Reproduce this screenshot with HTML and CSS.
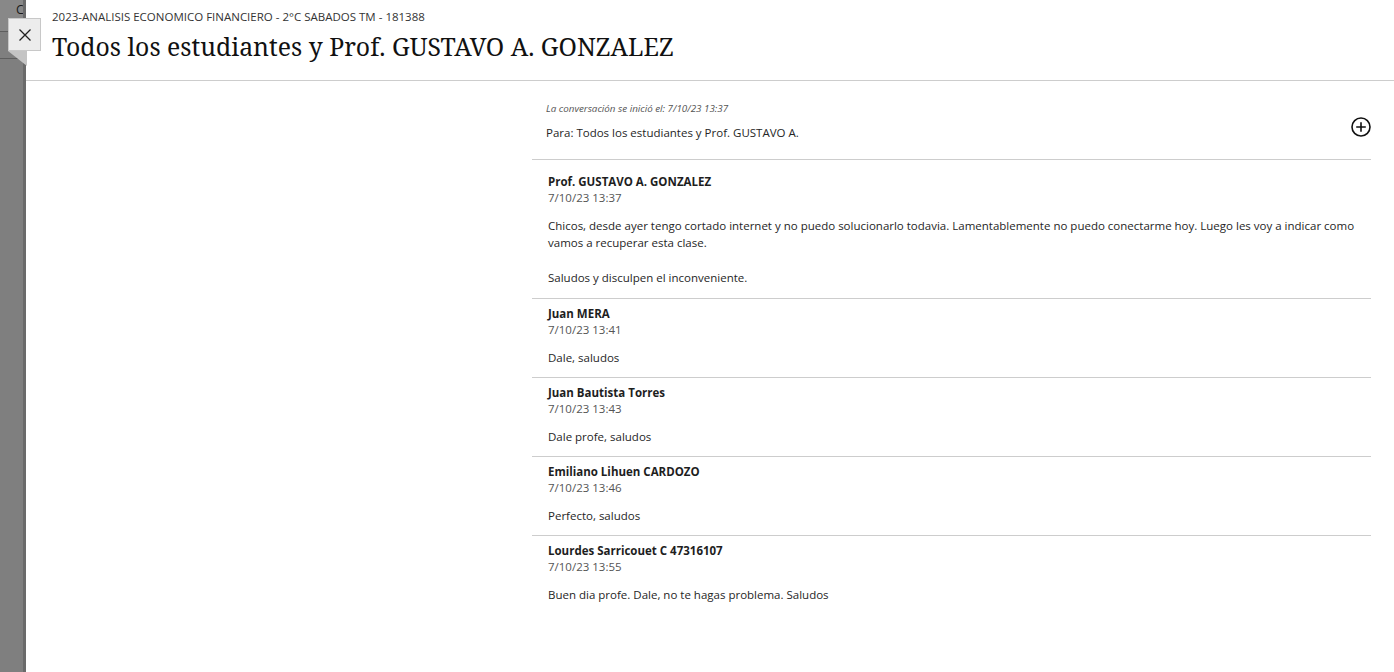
FILE: index.html
```html
<!DOCTYPE html>
<html lang="es">
<head>
<meta charset="utf-8">
<title>Conversación</title>
<link rel="stylesheet" href="styles.css">
</head>
<body>
<div class="page">
  <aside class="backdrop">
    <div class="backdrop-text">Co</div>
    <div class="backdrop-rule"></div>
    <div class="backdrop-rule second"></div>
  </aside>
  <main class="panel">
    <header class="panel-header">
      <div class="course">2023-ANALISIS ECONOMICO FINANCIERO - 2°C SABADOS TM - 181388</div>
      <h1 class="title">Todos los estudiantes y Prof. GUSTAVO A. GONZALEZ</h1>
    </header>
    <section class="conversation">
      <div class="conv-head">
        <div class="conv-meta">
          <div class="started">La conversación se inició el: 7/10/23 13:37</div>
          <div class="to">Para: Todos los estudiantes y Prof. GUSTAVO A.</div>
        </div>
        <button class="add-btn" aria-label="Agregar">
          <svg width="22" height="22" viewBox="0 0 22 22"><circle cx="11" cy="11" r="9" fill="none" stroke="#111" stroke-width="1.6"/><path d="M11 6.2v9.6M6.2 11h9.6" stroke="#111" stroke-width="1.6" fill="none"/></svg>
        </button>
      </div>
      <ul class="messages">
        <li class="message">
          <div class="author">Prof. GUSTAVO A. GONZALEZ</div>
          <div class="date">7/10/23 13:37</div>
          <div class="body"><p>Chicos, desde ayer tengo cortado internet y no puedo solucionarlo todavia. Lamentablemente no puedo conectarme hoy. Luego les voy a indicar como vamos a recuperar esta clase.</p><p>Saludos y disculpen el inconveniente.</p></div>
        </li>
        <li class="message">
          <div class="author">Juan MERA</div>
          <div class="date">7/10/23 13:41</div>
          <div class="body"><p>Dale, saludos</p></div>
        </li>
        <li class="message">
          <div class="author">Juan Bautista Torres</div>
          <div class="date">7/10/23 13:43</div>
          <div class="body"><p>Dale profe, saludos</p></div>
        </li>
        <li class="message">
          <div class="author">Emiliano Lihuen CARDOZO</div>
          <div class="date">7/10/23 13:46</div>
          <div class="body"><p>Perfecto, saludos</p></div>
        </li>
        <li class="message">
          <div class="author">Lourdes Sarricouet C 47316107</div>
          <div class="date">7/10/23 13:55</div>
          <div class="body"><p>Buen dia profe. Dale, no te hagas problema. Saludos</p></div>
        </li>
      </ul>
    </section>
  </main>
  <button class="close-btn" aria-label="Cerrar">
    <svg width="14" height="14" viewBox="0 0 14 14"><path d="M1.5 1.5l11 11M12.5 1.5l-11 11" stroke="#222" stroke-width="1.3" fill="none"/></svg>
  </button>
</div>
</body>
</html>
```
FILE: styles.css
```css
* { box-sizing: border-box; }
html, body { margin: 0; padding: 0; }
body {
  font-family: "Open Sans", "Noto Sans", sans-serif;
  color: #262626;
  background: #fff;
  width: 1394px;
  height: 672px;
  overflow: hidden;
}
.page {
  position: relative;
  display: flex;
  height: 672px;
}
.backdrop {
  width: 26px;
  flex: none;
  background: #7f7f7f;
  border-right: 3px solid #6a6a6a;
  overflow: hidden;
  position: relative;
}
.backdrop-text {
  font-size: 12.5px;
  line-height: 20px;
  color: #1a1a1a;
  padding-left: 16px;
  white-space: nowrap;
  background: #888;
  height: 31px;
}
.backdrop-rule { height: 1px; background: #5e5e5e; }
.backdrop-rule.second { margin-top: 26px; }
.panel {
  flex: 1;
  background: #fff;
  display: flex;
  flex-direction: column;
}
.panel-header {
  height: 81px;
  border-bottom: 1px solid #cdcdcd;
  padding: 9px 0 0 26px;
}
.course {
  font-size: 11.5px;
  line-height: 16px;
  color: #333;
}
.title {
  margin: 4px 0 0;
  font-family: "Noto Serif", "DejaVu Serif", "Liberation Serif", serif;
  font-weight: 400;
  font-size: 24.8px;
  line-height: 34px;
  color: #111;
}
.conversation {
  width: 839px;
  margin-left: auto;
  margin-right: 23px;
}
.conv-head {
  display: flex;
  align-items: flex-start;
  justify-content: space-between;
  padding: 20px 0 18px 14px;
  border-bottom: 1px solid #cdcdcd;
}
.started {
  font-size: 9.8px;
  line-height: 16px;
  font-style: italic;
  color: #555;
}
.to {
  margin-top: 8px;
  font-size: 11.5px;
  line-height: 16px;
  color: #262626;
}
.add-btn {
  margin-top: 15px;
  margin-right: -1px;
  border: 0;
  background: none;
  padding: 0;
  width: 22px;
  height: 22px;
  display: flex;
}
.messages {
  list-style: none;
  margin: 0;
  padding: 8px 0 0;
}
.message {
  padding: 7px 16px 11px;
  border-bottom: 1px solid #cdcdcd;
}
.message:first-child { padding-top: 6px; padding-bottom: 12px; }
.message:last-child { border-bottom: 0; }
.author {
  font-size: 11.5px;
  line-height: 16px;
  font-weight: 700;
  color: #1e1e1e;
}
.date {
  font-size: 11.5px;
  line-height: 16px;
  color: #555;
}
.body {
  margin-top: 11px;
  font-size: 11.5px;
  line-height: 17px;
  color: #262626;
}
.body p { margin: 0; }
.body p + p { margin-top: 18px; }
.close-btn {
  position: absolute;
  left: 8px;
  top: 18px;
  width: 33px;
  height: 33px;
  background: #ececec;
  border: 1px solid #c8c8c8;
  display: flex;
  align-items: center;
  justify-content: center;
  padding: 0;
}
.close-btn::after {
  content: "";
  position: absolute;
  left: -1px;
  top: 32px;
  border-style: solid;
  border-width: 0 19px 15px 0;
  border-color: transparent #c4c4c4 transparent transparent;
}
```
